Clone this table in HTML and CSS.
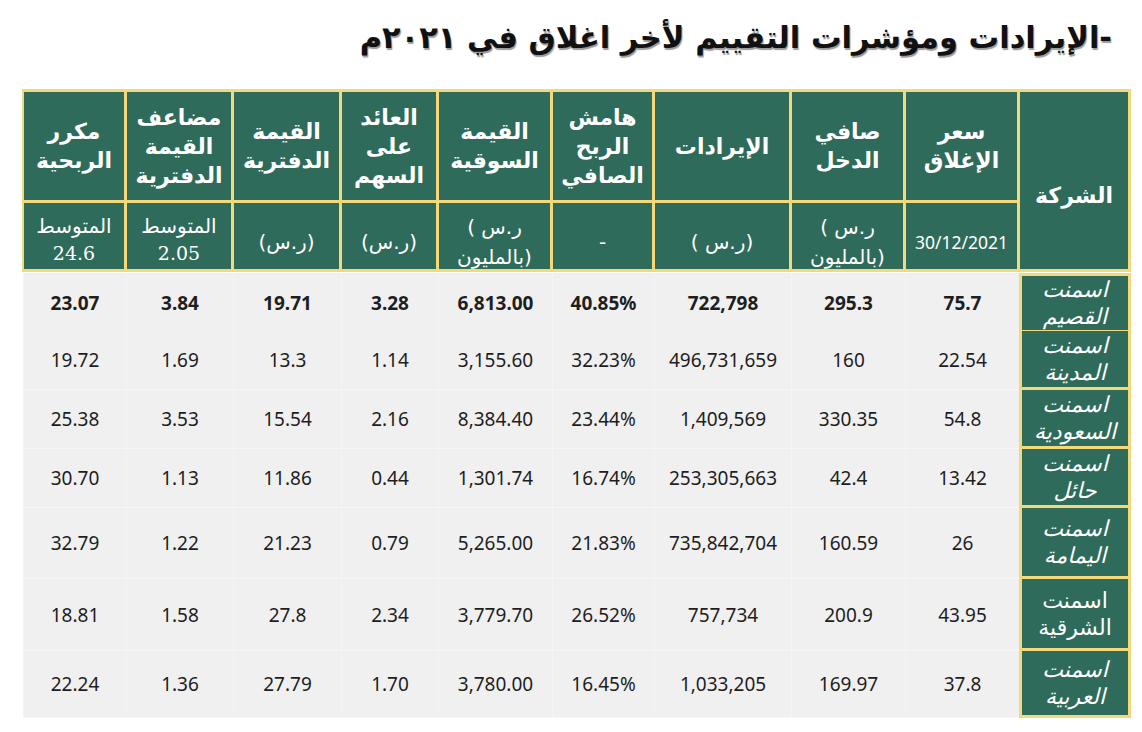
FILE: index.html
```html
<!DOCTYPE html>
<html lang="ar">
<head>
<meta charset="utf-8">
<title>الإيرادات ومؤشرات التقييم</title>
<link rel="stylesheet" href="styles.css">
</head>
<body>
<div class="page">
  <h1 class="title" dir="rtl">-الإيرادات ومؤشرات التقييم لأخر اغلاق في ٢٠٢١م</h1>

  <div class="head" dir="rtl">
    <div class="hc company-h">الشركة</div>
    <div class="hc">سعر<br>الإغلاق</div>
    <div class="hc">صافي<br>الدخل</div>
    <div class="hc">الإيرادات</div>
    <div class="hc">هامش<br>الربح<br>الصافي</div>
    <div class="hc">القيمة<br>السوقية</div>
    <div class="hc">العائد<br>على<br>السهم</div>
    <div class="hc">القيمة<br>الدفترية</div>
    <div class="hc">مضاعف<br>القيمة<br>الدفترية</div>
    <div class="hc">مكرر<br>الربحية</div>

    <div class="sc date">30/12/2021</div>
    <div class="sc"><span>ر.س )</span><span>(بالمليون</span></div>
    <div class="sc"><span>(ر.س )</span></div>
    <div class="sc">-</div>
    <div class="sc"><span>ر.س )</span><span>(بالمليون</span></div>
    <div class="sc"><span>(ر.س)</span></div>
    <div class="sc"><span>(ر.س)</span></div>
    <div class="sc avg"><span>المتوسط</span><span class="serif">2.05</span></div>
    <div class="sc avg"><span>المتوسط</span><span class="serif">24.6</span></div>
  </div>

  <div class="body" dir="rtl">
    <div class="row bold">
      <div class="co first slant">اسمنت<br>القصيم</div>
      <div class="c">75.7</div><div class="c">295.3</div><div class="c">722,798</div><div class="c">40.85%</div><div class="c">6,813.00</div><div class="c">3.28</div><div class="c">19.71</div><div class="c">3.84</div><div class="c">23.07</div>
    </div>
    <div class="row">
      <div class="co slant">اسمنت<br>المدينة</div>
      <div class="c">22.54</div><div class="c">160</div><div class="c">496,731,659</div><div class="c">32.23%</div><div class="c">3,155.60</div><div class="c">1.14</div><div class="c">13.3</div><div class="c">1.69</div><div class="c">19.72</div>
    </div>
    <div class="row">
      <div class="co slant">اسمنت<br>السعودية</div>
      <div class="c">54.8</div><div class="c">330.35</div><div class="c">1,409,569</div><div class="c">23.44%</div><div class="c">8,384.40</div><div class="c">2.16</div><div class="c">15.54</div><div class="c">3.53</div><div class="c">25.38</div>
    </div>
    <div class="row">
      <div class="co slant">اسمنت<br>حائل</div>
      <div class="c">13.42</div><div class="c">42.4</div><div class="c">253,305,663</div><div class="c">16.74%</div><div class="c">1,301.74</div><div class="c">0.44</div><div class="c">11.86</div><div class="c">1.13</div><div class="c">30.70</div>
    </div>
    <div class="row tall">
      <div class="co slant">اسمنت<br>اليمامة</div>
      <div class="c">26</div><div class="c">160.59</div><div class="c">735,842,704</div><div class="c">21.83%</div><div class="c">5,265.00</div><div class="c">0.79</div><div class="c">21.23</div><div class="c">1.22</div><div class="c">32.79</div>
    </div>
    <div class="row taller">
      <div class="co">اسمنت<br>الشرقية</div>
      <div class="c">43.95</div><div class="c">200.9</div><div class="c">757,734</div><div class="c">26.52%</div><div class="c">3,779.70</div><div class="c">2.34</div><div class="c">27.8</div><div class="c">1.58</div><div class="c">18.81</div>
    </div>
    <div class="row last">
      <div class="co slant">اسمنت<br>العربية</div>
      <div class="c">37.8</div><div class="c">169.97</div><div class="c">1,033,205</div><div class="c">16.45%</div><div class="c">3,780.00</div><div class="c">1.70</div><div class="c">27.79</div><div class="c">1.36</div><div class="c">22.24</div>
    </div>
  </div>
</div>
</body>
</html>
```

FILE: styles.css
```css
html, body {
  margin: 0;
  padding: 0;
  background: #ffffff;
}

.page {
  width: 1142px;
  height: 732px;
  padding-left: 22px;
  box-sizing: border-box;
  font-family: "DejaVu Sans", sans-serif;
}

.title {
  margin: 0;
  height: 89px;
  box-sizing: border-box;
  padding: 17px 30px 0 0;
  text-align: right;
  font-family: "DejaVu Sans", sans-serif;
  font-weight: bold;
  font-size: 30.5px;
  line-height: 42px;
  color: #111;
  text-shadow: 1px 2px 1px #9a9a9a;
}

.head {
  display: grid;
  width: 1109px;
  box-sizing: border-box;
  grid-template-columns: 108px 111px 111px 134px 99px 111px 94px 105px 104px 100px;
  grid-template-rows: 108px 66px;
  gap: 3px;
  padding: 3px;
  background: #f4d97a;
}

.hc, .sc {
  background: #2f6b5a;
  color: #ffffff;
  display: flex;
  flex-direction: column;
  align-items: center;
  justify-content: center;
  text-align: center;
}

.hc {
  font-weight: bold;
  font-size: 22px;
  line-height: 29px;
}

.company-h {
  grid-row: span 2;
  padding-top: 30px;
  box-sizing: border-box;
}

.sc {
  font-size: 20px;
  line-height: 30px;
  padding-top: 12px;
  box-sizing: border-box;
}

.sc.date {
  font-family: "Noto Sans", sans-serif;
  font-size: 17.5px;
}

.sc.avg {
  line-height: 27px;
  padding-top: 8px;
}

.serif {
  font-family: "DejaVu Serif", serif;
  font-size: 19px;
}

.body {
  margin: 1px 0 0 1px;
  width: 1108px;
}

.row {
  display: grid;
  grid-template-columns: 112px 114px 114px 137px 102px 114px 97px 108px 107px 103px;
  height: 58px;
}

.row + .row { height: 59px; }
.row + .row.tall { height: 71px; }
.row + .row.taller { height: 72px; }
.row + .row.last { height: 67px; }

.co {
  background: #2f6b5a;
  color: #ffffff;
  border: 3px solid #f4d97a;
  border-top: 0;
  box-sizing: border-box;
  display: flex;
  align-items: center;
  justify-content: center;
  text-align: center;
  font-size: 22px;
  line-height: 27px;
}

.co.slant {
  font-style: italic;
}

.co.first {
  border-top: 3px solid #f4d97a;
}

.c {
  background: #f0f0f0;
  border-bottom: 1px solid #f6f6f6;
  border-left: 1px solid #f4f4f4;
  box-sizing: border-box;
  display: flex;
  align-items: center;
  justify-content: center;
  font-family: "Noto Sans", sans-serif;
  font-size: 19px;
  color: #1e1e1e;
}

.row.bold .c {
  font-weight: bold;
}
```
